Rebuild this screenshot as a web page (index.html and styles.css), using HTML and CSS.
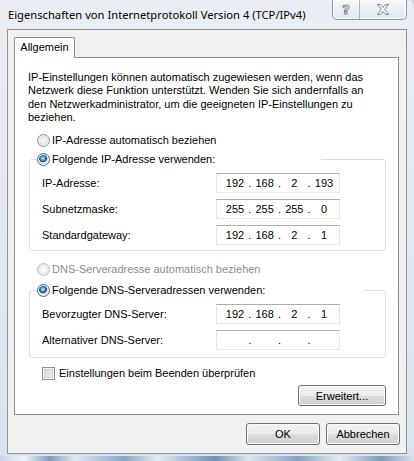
FILE: index.html
```html
<!DOCTYPE html>
<html lang="de">
<head>
<meta charset="utf-8">
<title>Eigenschaften von Internetprotokoll Version 4 (TCP/IPv4)</title>
<link rel="stylesheet" href="styles.css">
</head>
<body>
<div class="window">
  <div class="titlebar">
    <span class="title">Eigenschaften von Internetprotokoll Version 4 (TCP/IPv4)</span>
    <div class="caption-btns">
      <div class="cbtn help"><span class="help-glyph">?</span></div>
      <div class="cbtn close">
        <svg width="12" height="11" viewBox="0 0 12 11" aria-hidden="true">
          <polygon points="0.5,0.5 3.5,0.5 6,3.5 8.5,0.5 11.5,0.5 7.6,5.5 11.5,10.5 8.5,10.5 6,7.5 3.5,10.5 0.5,10.5 4.4,5.5" fill="#fbfcfd" stroke="#7d8591" stroke-width="1" stroke-linejoin="round"/>
        </svg>
      </div>
    </div>
  </div>

  <div class="client">
    <div class="tabs">
      <div class="tab">Allgemein</div>
    </div>

    <div class="panel">
      <p class="intro">IP-Einstellungen können automatisch zugewiesen werden, wenn das<br>Netzwerk diese Funktion unterstützt. Wenden Sie sich andernfalls an<br>den Netzwerkadministrator, um die geeigneten IP-Einstellungen zu<br>beziehen.</p>

      <div class="opt opt-first"><span class="radio"></span><span>IP-Adresse automatisch beziehen</span></div>

      <fieldset class="group group-ip">
        <legend class="group-head legend-ip"><span class="radio checked"></span><span>Folgende IP-Adresse verwenden:</span></legend>
        <div class="group-body">
          <div class="field-row">
            <span class="field-label">IP-Adresse:</span>
            <div class="ipbox"><span class="oct">192</span><span class="dot">.</span><span class="oct">168</span><span class="dot">.</span><span class="oct">2</span><span class="dot">.</span><span class="oct">193</span></div>
          </div>
          <div class="field-row">
            <span class="field-label">Subnetzmaske:</span>
            <div class="ipbox"><span class="oct">255</span><span class="dot">.</span><span class="oct">255</span><span class="dot">.</span><span class="oct">255</span><span class="dot">.</span><span class="oct">0</span></div>
          </div>
          <div class="field-row">
            <span class="field-label">Standardgateway:</span>
            <div class="ipbox"><span class="oct">192</span><span class="dot">.</span><span class="oct">168</span><span class="dot">.</span><span class="oct">2</span><span class="dot">.</span><span class="oct">1</span></div>
          </div>
        </div>
      </fieldset>

      <div class="opt opt-dns disabled"><span class="radio disabled"></span><span>DNS-Serveradresse automatisch beziehen</span></div>

      <fieldset class="group group-dns">
        <legend class="group-head legend-dns"><span class="radio checked"></span><span>Folgende DNS-Serveradressen verwenden:</span></legend>
        <div class="group-body">
          <div class="field-row">
            <span class="field-label">Bevorzugter DNS-Server:</span>
            <div class="ipbox"><span class="oct">192</span><span class="dot">.</span><span class="oct">168</span><span class="dot">.</span><span class="oct">2</span><span class="dot">.</span><span class="oct">1</span></div>
          </div>
          <div class="field-row">
            <span class="field-label">Alternativer DNS-Server:</span>
            <div class="ipbox"><span class="oct"></span><span class="dot">.</span><span class="oct"></span><span class="dot">.</span><span class="oct"></span><span class="dot">.</span><span class="oct"></span></div>
          </div>
        </div>
      </fieldset>

      <div class="opt opt-check"><span class="checkbox"></span><span>Einstellungen beim Beenden überprüfen</span></div>

      <div class="adv-row">
        <button class="btn btn-adv" type="button">Erweitert...</button>
      </div>
    </div>

    <div class="dialog-buttons">
      <button class="btn btn-dlg" type="button">OK</button>
      <button class="btn btn-dlg" type="button">Abbrechen</button>
    </div>
  </div>
</div>
</body>
</html>
```

FILE: styles.css
```css
* {
  box-sizing: border-box;
}

html,
body {
  margin: 0;
  padding: 0;
}

body {
  width: 414px;
  height: 461px;
  overflow: hidden;
  font-family: "Liberation Sans", Arial, sans-serif;
  font-size: 11px;
  color: #000;
  background: #c9d6e4;
}

/* Aero glass frame */
.window {
  width: 414px;
  height: 461px;
  display: flex;
  flex-direction: column;
  padding: 0 7px 7px 7px;
  border-top-right-radius: 7px;
  background:
    linear-gradient(to right, #c7d6e6 0, #eef3f8 6%, #7d9cbf 12%, #dfe8f1 18%, #8aa6c6 30%, #e3ebf3 38%, #6f90b7 52%, #dde6f0 60%, #87a2c2 72%, #e4ecf4 82%, #7f9cbe 92%, #d6e1ec 100%) left bottom / 100% 5px no-repeat,
    linear-gradient(to bottom, #e9eef4 0%, #e2e9f1 40%, #d9e3ee 100%);
}

.titlebar {
  flex: none;
  height: 29px;
  display: flex;
  justify-content: space-between;
  align-items: flex-start;
}

.title {
  padding-left: 1px;
  font-family: "Noto Sans", "Open Sans", sans-serif;
  font-size: 11.2px;
  line-height: 30px;
  white-space: nowrap;
}

.caption-btns {
  display: flex;
  height: 20px;
  border: 1px solid #8f99a6;
  border-top: none;
  border-radius: 0 0 5px 5px;
  background: linear-gradient(to bottom, rgba(255, 255, 255, 0.55), rgba(236, 242, 248, 0.35) 50%, rgba(214, 226, 238, 0.5));
  box-shadow: inset 0 0 0 1px rgba(255, 255, 255, 0.6);
  overflow: hidden;
}

.cbtn {
  height: 19px;
  display: flex;
  align-items: center;
  justify-content: center;
}

.help {
  width: 27px;
  border-right: 1px solid #a9b3bf;
}

.close {
  width: 46px;
}

.help-glyph {
  font-family: "DejaVu Sans", sans-serif;
  font-weight: bold;
  font-size: 13px;
  line-height: 13px;
  color: #fbfcfd;
  -webkit-text-stroke: 1px #7d8591;
}

/* client area of the dialog */
.client {
  flex: 1;
  display: flex;
  flex-direction: column;
  align-items: flex-start;
  background: #f0f0f0;
  border: 1px solid #8c939c;
  padding: 7px 6px 0 6px;
}

.tabs {
  display: flex;
  position: relative;
  z-index: 1;
}

.tab {
  width: 61px;
  height: 21px;
  margin-bottom: -1px;
  border: 1px solid #898c95;
  border-bottom: none;
  border-radius: 2px 2px 0 0;
  background: #fff;
  text-align: center;
  line-height: 19px;
}

.panel {
  width: 385px;
  height: 358px;
  border: 1px solid #898c95;
  background: #fff;
  display: flex;
  flex-direction: column;
}

.intro {
  margin: 13px 0 0 0;
  padding-left: 13px;
  line-height: 13.33px;
  white-space: nowrap;
}

.opt {
  display: flex;
  align-items: center;
  height: 16px;
  padding-left: 22px;
  white-space: nowrap;
}

.opt-first {
  margin-top: 8px;
}

.opt-dns {
  margin-top: 10px;
}

.opt.disabled {
  color: #8d8d8d;
}

.opt-check {
  margin-top: 7px;
  padding-left: 27px;
}

/* radio buttons and check box */
.radio {
  width: 13px;
  height: 13px;
  flex: none;
  margin-right: 2px;
  border-radius: 50%;
  border: 1px solid #8b8f94;
  background: radial-gradient(circle at 50% 50%, #f6f6f6 0, #e9e9e9 3px, #d4d4d4 5.5px);
  box-shadow: inset 0 0 0 1px #f4f4f4;
}

.radio.checked {
  border-color: #4b6b88;
  background:
    radial-gradient(circle at 45% 40%, #c8ecfc 0, #5db3e6 1.6px, #1f6aa6 3px, #123f66 3.6px, rgba(0, 0, 0, 0) 4.2px),
    radial-gradient(circle at 50% 50%, #f4f4f4 0, #e6e6e6 3px, #d0d6dc 5.5px);
}

.radio.disabled {
  border-color: #bcbfc2;
  background: radial-gradient(circle at 50% 50%, #fafafa 0, #f1f1f1 3px, #e6e6e6 5.5px);
  box-shadow: none;
}

.checkbox {
  width: 13px;
  height: 13px;
  flex: none;
  margin-right: 4px;
  border: 1px solid #8e8f8f;
  background: linear-gradient(135deg, #d8d8d8 0, #f0f0f0 100%);
  box-shadow: inset 0 0 0 1px #f6f6f6, inset 0 0 0 2px #cfcfcf;
}

/* group boxes */
.group {
  margin: 0 0 0 14px;
  padding: 0;
  width: 357px;
  border: 1px solid #d5dfe5;
  border-radius: 3px;
  min-width: 0;
}

.group-ip {
  margin-top: 3px;
}

.group-dns {
  margin-top: 5px;
}

.group-head {
  display: flex;
  align-items: center;
  height: 16px;
  padding: 0;
  margin-left: 7px;
  white-space: nowrap;
  background: #fff;
}

.legend-ip {
  width: 284px;
}

.legend-dns {
  width: 327px;
}

.group-body {
  display: flex;
  flex-direction: column;
  gap: 6px;
  padding: 6px 0 5px 12px;
}

.group-dns .group-body {
  padding-bottom: 7px;
}

.field-row {
  display: flex;
  align-items: center;
  height: 20px;
}

.field-label {
  width: 174px;
  flex: none;
  white-space: nowrap;
}

.ipbox {
  width: 124px;
  height: 20px;
  display: flex;
  padding-left: 7px;
  background: #fff;
  border: 1px solid #e2e3ea;
  border-top-color: #abadb3;
  border-bottom-color: #e3e9ef;
  line-height: 18px;
}

.oct {
  width: 22px;
  text-align: center;
}

.dot {
  width: 7.67px;
  text-align: center;
}

/* push buttons */
.btn {
  font-family: inherit;
  font-size: 11px;
  color: #000;
  margin: 0;
  padding: 0;
  border: 1px solid #707070;
  border-radius: 3px;
  background: linear-gradient(to bottom, #f2f2f2 0%, #ebebeb 50%, #dddddd 51%, #cfcfcf 100%);
  box-shadow: inset 0 0 0 1px #fcfcfc;
  line-height: 18px;
}

.adv-row {
  display: flex;
  justify-content: flex-end;
  margin-top: 4px;
  padding-right: 12px;
}

.btn-adv {
  width: 88px;
  height: 21px;
}

.dialog-buttons {
  align-self: stretch;
  display: flex;
  justify-content: flex-end;
  gap: 6px;
  margin-top: 8px;
}

.btn-dlg {
  width: 74px;
  height: 22px;
}
```
